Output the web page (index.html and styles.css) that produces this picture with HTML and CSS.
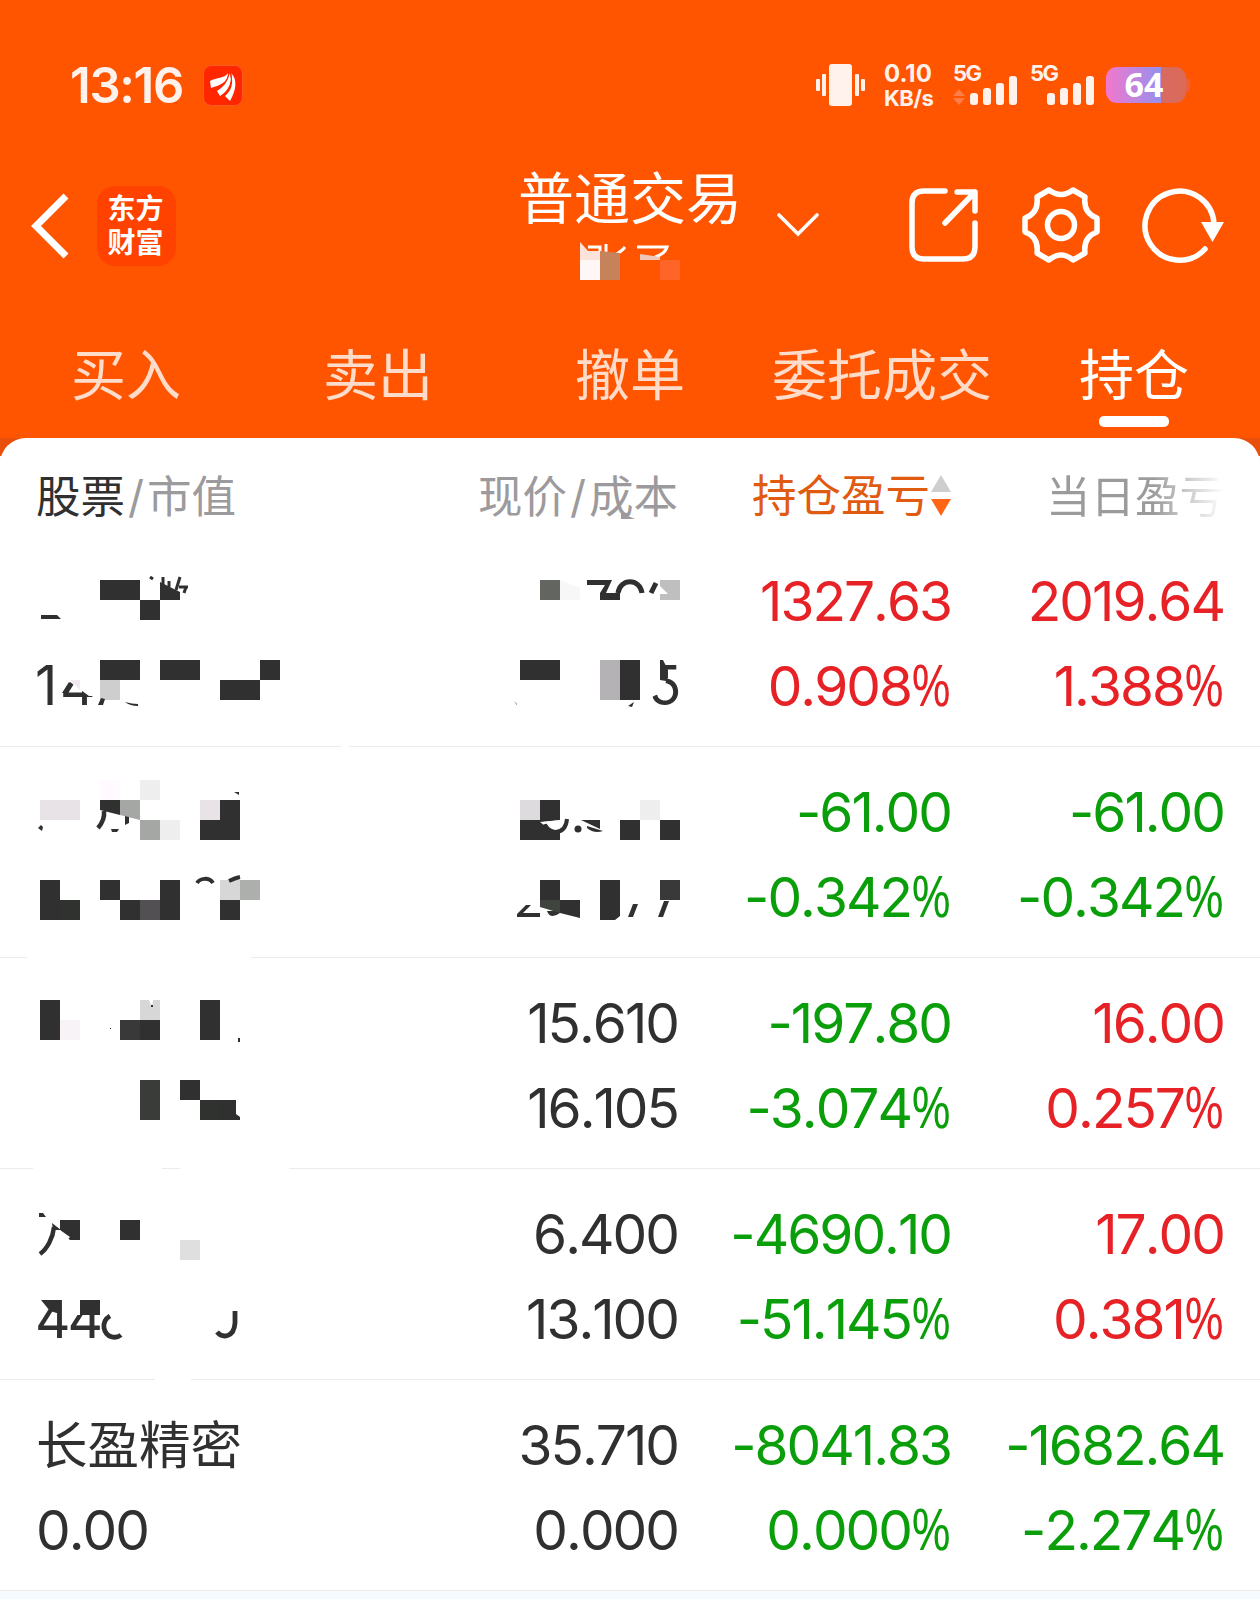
FILE: index.html
```html
<!DOCTYPE html>
<html lang="zh-CN">
<head>
    <meta charset="UTF-8">
    <meta name="viewport" content="width=device-width, initial-scale=1.0">
    <title>普通交易</title>
    <link rel="stylesheet" href="styles.css">
</head>
<body>

<header class="header">
    <div class="status">
        <span class="time">13:16</span>
        <svg class="app-icon" width="40" height="41" viewBox="0 0 40 41">
            <rect x="0.5" y="0.5" width="39" height="40" rx="8" fill="#ff2600" stroke="#ff5a2a"/>
            <path d="M7 16C14 12 21 14 25 8C25 17 18 20 8 23Z" fill="#fff"/>
            <path d="M14 26C19 23 25 18 26 8C31 15 26 26 17 31Z" fill="#fff"/>
            <path d="M22 31C28 26 31 19 28 8C35 15 33 25 27 36Z" fill="#fff"/>
            <path d="M26 8C25 17 19 21 12 25M28 9C30 18 26 25 20 31" fill="none" stroke="#ff2600" stroke-width="1.1"/>
        </svg>
        <div class="status-right">
            <svg width="50" height="42" viewBox="0 0 50 42" fill="#fff1ec">
                <rect x="13" y="0" width="23" height="42" rx="3"/>
                <rect x="0" y="15" width="4" height="12" rx="1"/>
                <rect x="6" y="10" width="4" height="22" rx="1"/>
                <rect x="39" y="10" width="4" height="22" rx="1"/>
                <rect x="45" y="15" width="4" height="12" rx="1"/>
            </svg>
            <div class="speed"><span>0.10</span><span class="unit">KB/s</span></div>
            <svg class="signal" width="66" height="46" viewBox="0 0 66 46" fill="#fff1ec">
                <text x="0" y="19" class="net">5G</text>
                <path d="M6 27L12 34H0ZM6 43L0 36H12Z" fill="#ff7d49"/>
                <rect x="17" y="31" width="8" height="12" rx="3"/>
                <rect x="30" y="26" width="8" height="17" rx="3"/>
                <rect x="43" y="21" width="8" height="22" rx="3"/>
                <rect x="56" y="14" width="8" height="29" rx="3"/>
            </svg>
            <svg class="signal second" width="66" height="46" viewBox="0 0 66 46" fill="#fff1ec">
                <text x="0" y="19" class="net">5G</text>
                <rect x="17" y="31" width="8" height="12" rx="3"/>
                <rect x="30" y="26" width="8" height="17" rx="3"/>
                <rect x="43" y="21" width="8" height="22" rx="3"/>
                <rect x="56" y="14" width="8" height="29" rx="3"/>
            </svg>
            <div class="battery">64</div>
            <div class="battery-tip"></div>
        </div>
    </div>

    <div class="nav">
        <svg class="back" width="40" height="68" viewBox="0 0 40 68" fill="none" stroke="#fff" stroke-width="7">
            <path d="M36 4L6 34L36 64"/>
        </svg>
        <div class="logo"><span>东方</span><span>财富</span></div>
        <div class="account">
            <h1>普通交易</h1>
            <svg width="100" height="42" viewBox="0 0 100 42">
                <path d="M8 8H20V16M26 5V15M35 16Q42 12 45 8M57 8H87Q85 15 75 18" fill="none" stroke="#fff" stroke-width="3"/>
                <path d="M0 3L8 12H20V21H0Z" fill="#fbe3d9"/>
                <rect x="0" y="21" width="20" height="20" fill="#fff7f5"/>
                <path d="M20 12L40 14V41H20Z" fill="#c6825a"/>
                <path d="M60 15L80 18V21H60Z" fill="#f0c6b8"/>
                <rect x="80" y="21" width="20" height="20" fill="#ff6528"/>
            </svg>
        </div>
        <svg class="down" width="44" height="26" viewBox="0 0 44 26" fill="none" stroke="#fff" stroke-width="3.6" stroke-linecap="round">
            <path d="M3 2L22 21L41 2"/>
        </svg>
        <div class="tools">
            <svg width="70" height="76" viewBox="0 0 70 76" fill="none" stroke="#fff" stroke-width="5.5" stroke-linecap="round" stroke-linejoin="round">
                <path d="M35 3H14Q2 3 2 15V59Q2 71 14 71H53Q65 71 65 59V35"/>
                <path d="M47 4H65V23M65 4L35 35"/>
            </svg>
            <svg width="78" height="76" viewBox="0 0 78 76" fill="none" stroke="#fff" stroke-width="5.5" stroke-linejoin="round">
                <path d="M27 2Q39 11 51 2L63 9Q61 25 75 30V44Q61 49 63 65L51 72Q39 62 27 72L15 65Q17 49 3 44V30Q17 25 15 9Z"/>
                <circle cx="39" cy="37" r="13.5"/>
            </svg>
            <svg width="84" height="76" viewBox="0 0 84 76" fill="none" stroke="#fff" stroke-width="5.5">
                <path d="M72 36A34.500 34.500 0 1 0 63 61" stroke-linecap="round"/>
                <path d="M59 34H82L70.500 54Z" fill="#fff" stroke="none"/>
            </svg>
        </div>
    </div>

    <nav class="tabs">
        <a>买入</a>
        <a>卖出</a>
        <a>撤单</a>
        <a>委托成交</a>
        <a class="active">持仓</a>
    </nav>
</header>

<main class="panel">
    <div class="sheet">
        <div class="thead">
            <div><b>股票</b><span class="slash">/</span>市值</div>
            <div>现价<span class="slash">/</span>成本
                <svg class="smudge" width="14" height="7" viewBox="0 0 14 7"><path d="M0 0L14 6H0Z" fill="#9c9a9c"/></svg>
            </div>
            <div class="sorted">持仓盈亏<svg width="20" height="42" viewBox="0 0 20 42"><path d="M10 0L20 17H0Z" fill="#cecece"/><path d="M0 24H20L10 41Z" fill="#ff6515"/></svg></div>
            <div><span class="fade">当日盈亏</span></div>
        </div>

        <div class="row">
            <div></div>
            <div></div>
            <div class="up"><p>1327.63</p><p>0.908<i>%</i></p></div>
            <div class="up"><p>2019.64</p><p>1.388<i>%</i></p></div>
            <svg class="mosaic" width="700" height="211" viewBox="0 0 700 211">
                <text x="35" y="169">1</text>
                <text x="60" y="169">4</text>
                <path d="M58 125V156L70 146L89 160H96V125Z" fill="#fff"/>
                <path d="M70 144H80V154Z" fill="#f1e9ef"/>
                <path d="M62 157L69 146L72 149L67 157Z"/>
                <path d="M100 44H140V64H100ZM160 46L180 56V64H160ZM140 64H160V84H140ZM41 79H57L61 83H41Z"/>
                <path d="M163 41V49M169 45V51M180 41L176 54M179 51H188M186 51L184 57M150 41L153 43" fill="none" stroke="#303030" stroke-width="3"/>
                <path d="M100 124H140V144H100ZM160 124H200V144H160ZM260 124H280V144H260ZM220 144H260V164H220Z"/>
                <rect x="100" y="144" width="20" height="20" fill="#cecece"/>
                <path d="M98 169L101 162L105 163L103 169ZM125 166Q132 168 138 168V170Q130 170 125 166Z"/>
                <rect x="540" y="44" width="20" height="20" fill="#636561"/>
                <path d="M560 44L580 52V64H560Z" fill="#f7f7f7"/>
                <path d="M587 44H612L606 57H620V64H600V57L605 49H587Z"/>
                <path d="M618 57C620 42 640 42 642 57M651 57L656 47" fill="none" stroke="#303030" stroke-width="5"/>
                <path d="M660 44H680V64H660V58H668L660 50Z" fill="#bfbfbf"/>
                <text x="648" y="169">5</text>
                <path d="M645 124H660V144L666 145L664 155L652 161H645Z" fill="#fff"/>
                <path d="M520 124H560V144H520ZM620 124H640V164H620ZM660 124H663L668 134V142L666 144H660Z"/>
                <rect x="600" y="124" width="20" height="40" fill="#b5b2b5"/>
                <path d="M514 165L517 168V169ZM628 170L634 166L632 171Z"/>
                <rect x="341" y="208" width="8" height="3" fill="#fff"/>
            </svg>
        </div>

        <div class="row">
            <div></div>
            <div></div>
            <div class="down-val"><p>-61.00</p><p>-0.342<i>%</i></p></div>
            <div class="down-val"><p>-61.00</p><p>-0.342<i>%</i></p></div>
            <svg class="mosaic" width="700" height="211" viewBox="0 0 700 211">
                <rect x="100" y="33" width="20" height="20" fill="#fffaff"/>
                <rect x="140" y="33" width="20" height="20" fill="#eee"/>
                <rect x="40" y="53" width="40" height="20" fill="#e7e3e7"/>
                <path d="M100 53H120V68L100 63Z"/>
                <path d="M120 53H140V73L120 68Z" fill="#a5a7a4"/>
                <path d="M104 64Q105 73 98 81" fill="none" stroke="#303030" stroke-width="4.500"/>
                <path d="M125 69L129 70V76L125 78ZM111 82H119L117 85H112ZM38 81L41 78L43 80L42 84ZM234 45H239V48Z"/>
                <rect x="140" y="73" width="20" height="20" fill="#a5a7a4"/>
                <rect x="160" y="73" width="20" height="20" fill="#eee"/>
                <rect x="200" y="53" width="20" height="20" fill="#e7e3e7"/>
                <path d="M220 53H240V93H200V73H220Z"/>
                <path d="M40 133H60V173H40ZM100 133H120V153H100ZM120 153H140V173H120ZM160 133H180V173H160ZM220 153H240V173H220Z"/>
                <rect x="60" y="153" width="20" height="20" fill="#2f322f"/>
                <rect x="140" y="153" width="20" height="20" fill="#535053"/>
                <rect x="220" y="133" width="20" height="20" fill="#d7d7d7"/>
                <rect x="240" y="133" width="20" height="20" fill="#adafad"/>
                <path d="M197 136C200 131 209 130 213 136M229 134Q235 131 240 130" fill="none" stroke="#303030" stroke-width="4"/>
                <rect x="520" y="53" width="20" height="20" fill="#dedbde"/>
                <path d="M540 53H560V73L540 75L545 79L560 86V93H520V73H540Z"/>
                <path d="M545 77Q548 85 556 85Q566 84 567 72" fill="none" stroke="#303030" stroke-width="4"/>
                <path d="M543 75L562 73Q562 82 554 82Q549 81 547 77Z" fill="#fff"/>
                <circle cx="578" cy="82" r="3.500"/>
                <path d="M581 73H600V82ZM587 79L603 84Q594 87 587 81Z"/>
                <path d="M620 73H640V93H620ZM660 73H680V93H660Z"/>
                <rect x="640" y="53" width="20" height="20" fill="#eee"/>
                <path d="M540 133H560V153H580V171L560 166Q550 173 547 164H560V153H540ZM600 133H620V169L615 173H600Z"/>
                <path d="M540 153H560V166L540 160Z" fill="#3f443f"/>
                <rect x="660" y="133" width="20" height="20" fill="#393939"/>
                <path d="M517 170V167L526 158H531L523 166H540V170ZM628 170L633 157H638L633 170ZM658 170L664 154H669L663 170Z"/>
                <rect x="27" y="208" width="224" height="3" fill="#fff"/>
            </svg>
        </div>

        <div class="row">
            <div></div>
            <div><p>15.610</p><p>16.105</p></div>
            <div class="down-val"><p>-197.80</p><p>-3.074<i>%</i></p></div>
            <div class="up"><p>16.00</p><p>0.257<i>%</i></p></div>
            <svg class="mosaic" width="700" height="211" viewBox="0 0 700 211">
                <path d="M40 42H60V82H40ZM140 62H160V82H140ZM200 42H220V82H200ZM238 80H240V84H238ZM110 70H111V71H110Z"/>
                <rect x="60" y="62" width="20" height="20" fill="#f7f3f7"/>
                <rect x="120" y="62" width="20" height="20" fill="#393939"/>
                <path d="M140 42H149L152 50L153 42H160V62H140Z" fill="#d7d7d7"/>
                <rect x="151" y="47" width="2" height="2"/>
                <rect x="140" y="122" width="20" height="40" fill="#393c39"/>
                <rect x="200" y="142" width="20" height="20" fill="#2f322f"/>
                <path d="M180 122H200V142H180ZM220 142H236V156L240 159V162H220Z"/>
                <path d="M33 208H162V211H33ZM180 208H289V211H180Z" fill="#fff"/>
            </svg>
        </div>

        <div class="row">
            <div></div>
            <div><p>6.400</p><p>13.100</p></div>
            <div class="down-val"><p>-4690.10</p><p>-51.145<i>%</i></p></div>
            <div class="up"><p>17.00</p><p>0.381<i>%</i></p></div>
            <svg class="mosaic" width="700" height="211" viewBox="0 0 700 211">
                <path d="M39 44H43L46 48H39ZM60 51H80V71H70L60 61ZM120 51H140V71H120ZM52 54L61 61H53Z"/>
                <path d="M60 61L70 68L67 71H60Z" fill="#fff"/>
                <path d="M54 58C53 69 47 80 40 85" fill="none" stroke="#303030" stroke-width="4.500"/>
                <rect x="180" y="71" width="20" height="20" fill="#dfdfdf"/>
                <text x="35" y="169" class="tight">44</text>
                <path d="M66 125H104V146H66Z" fill="#fff"/>
                <path d="M36 125H66V131H36ZM80 131V146H66V131Z" fill="#fff"/>
                <path d="M41 131H60V145L50 142ZM80 131H100V146H80Z"/>
                <path d="M110 147Q103 151 104 159C106 169 116 170 121 166M235 142V154C234 168 223 170 217 163" fill="none" stroke="#303030" stroke-width="4.800"/>
                <rect x="155" y="208" width="36" height="3" fill="#fff"/>
            </svg>
        </div>

        <div class="row">
            <div><p class="name">长盈精密</p><p>0.00</p></div>
            <div><p>35.710</p><p>0.000</p></div>
            <div class="down-val"><p>-8041.83</p><p>0.000<i>%</i></p></div>
            <div class="down-val"><p>-1682.64</p><p>-2.274<i>%</i></p></div>
        </div>
    </div>
</main>

</body>
</html>
```
FILE: styles.css
```css
* {
    box-sizing: border-box;
}
body {
    margin: 0;
    height: 1599px;
    overflow: hidden;
    background-color: #f5faff;
    color: #303030;
    font-family: Inter, "Noto Sans CJK SC", sans-serif;
}
svg {
    display: block;
    flex: none;
    overflow: visible;
}
.header {
    height: 438px;
    background-color: #ff5500;
    color: #fff;
}

/* status bar */
.status {
    display: flex;
    align-items: center;
    height: 170px;
    padding: 0 70px 0 70px;
}
.time {
    width: 133px;
    padding-top: 2px;
    font-size: 49px;
    font-weight: 600;
    line-height: 60px;
    letter-spacing: -1.3px;
    color: #fff1ec;
}
.status-right {
    display: flex;
    align-items: center;
    margin-left: auto;
}
.speed {
    display: flex;
    flex-direction: column;
    width: 56px;
    margin-left: 18px;
    padding-top: 2px;
    font-size: 24px;
    font-weight: 700;
    line-height: 24px;
    color: #fff1ec;
}
.unit {
    font-size: 22px;
    letter-spacing: -0.5px;
}
.signal {
    margin-left: 13px;
}
.signal.second {
    margin-left: 11px;
}
.net {
    font-size: 22px;
    font-weight: 700;
    letter-spacing: -1.5px;
}
.battery {
    width: 80px;
    height: 36px;
    margin-left: 10px;
    border-radius: 11px;
    background: linear-gradient(90deg, #f278cc 0, #9590ee 55px, #d86a60 55px, #dc6a58 100%);
    font-family: "Open Sans", sans-serif;
    font-size: 34px;
    font-weight: 700;
    line-height: 34px;
    text-align: center;
    padding-right: 4px;
}
.battery-tip {
    width: 4px;
    height: 14px;
    background-color: #e86240;
    border-radius: 0 4px 4px 0;
}

/* title bar */
.nav {
    display: flex;
    align-items: center;
    height: 112px;
    padding: 0 34px 0 30px;
}
.logo {
    display: flex;
    flex-direction: column;
    justify-content: center;
    width: 79px;
    height: 80px;
    margin-left: 27px;
    padding: 0 2px 1px 0;
    border-radius: 18px;
    background-color: #ff4200;
    font-size: 28px;
    font-weight: 700;
    line-height: 34px;
    text-align: center;
}
.account {
    align-self: flex-start;
    width: 224px;
    margin-left: 342px;
}
.account h1 {
    margin: 0;
    padding-top: 2px;
    font-size: 56px;
    font-weight: 400;
    line-height: 54px;
}
.account svg {
    margin: 13px 0 0 62px;
}
.down {
    margin-left: 34px;
}
.tools {
    display: flex;
    align-items: center;
    gap: 42px;
    margin-left: auto;
}

/* tabs */
.tabs {
    display: grid;
    grid-template-columns: repeat(5, 1fr);
    padding-top: 53px;
}
.tabs a {
    display: flex;
    flex-direction: column;
    align-items: center;
    font-size: 55px;
    line-height: 80px;
    color: #ffdcc9;
}
.tabs .active {
    color: #fff;
}
.tabs .active::after {
    content: "";
    width: 70px;
    height: 11px;
    margin-top: 1px;
    border-radius: 5px;
    background-color: #fff;
}

/* holdings */
.panel {
    background: linear-gradient(#e84f0a, #e84f0a) no-repeat 0 0 / 100% 18px;
}
.sheet {
    border-radius: 26px 26px 0 0;
    background-color: #fff;
}
.thead, .row {
    display: grid;
    grid-template-columns: 1fr 273px 273px 273px;
    padding: 0 36px;
}
.thead > div, .row > div {
    text-align: right;
}
.thead > div:first-child, .row > div:first-child {
    text-align: left;
}
.thead {
    height: 98px;
    padding-top: 24px;
    font-size: 44.5px;
    line-height: 70px;
    color: #9c9a9c;
}
.thead > div {
    position: relative;
    white-space: nowrap;
}
.thead b {
    font-weight: 400;
    color: #303030;
}
.thead .sorted {
    display: flex;
    justify-content: flex-end;
    align-items: center;
    height: 68px;
    gap: 1px;
    color: #e05a10;
}
.slash {
    display: inline-block;
    width: 22px;
    text-align: center;
}
.smudge {
    position: absolute;
    right: 43px;
    bottom: 16px;
}
.fade {
    background: linear-gradient(90deg, #9c9a9c 60%, #fff 100%);
    -webkit-background-clip: text;
    background-clip: text;
    color: transparent;
}
.row {
    position: relative;
    height: 211px;
    padding-top: 23px;
    border-bottom: 1px solid #ebebeb;
}
.row p {
    margin: 0;
    font-size: 55px;
    line-height: 84.5px;
    letter-spacing: -2px;
    font-kerning: none;
}
.row .name {
    font-size: 51.5px;
    letter-spacing: 0;
}
.row i {
    display: inline-block;
    width: 40px;
    font-family: "Open Sans", sans-serif;
    font-style: normal;
    font-size: 56px;
    line-height: 60px;
    letter-spacing: 0;
    transform: scaleX(0.87);
    transform-origin: 0 50%;
}
.up {
    color: #e62226;
}
.down-val {
    color: #0b9e0b;
}
.mosaic {
    position: absolute;
    left: 0;
    top: 0;
    fill: #303030;
    font-size: 55px;
}
.tight {
    letter-spacing: -3px;
}
```
